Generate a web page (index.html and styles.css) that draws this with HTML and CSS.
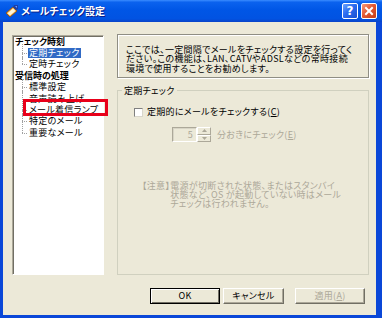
FILE: index.html
```html
<!DOCTYPE html>
<html lang="ja">
<head>
<meta charset="utf-8">
<title>メールチェック設定</title>
<link rel="stylesheet" href="styles.css">
</head>
<body>
<div class="window">
  <div class="titlebar">
    <svg class="app-icon" viewBox="0 0 14 14" width="14" height="14">
      <path d="M1 9 L8 3 L12 7 L5 13 Z" fill="#f2a93b" stroke="#8a4a10" stroke-width="0.8"/>
      <path d="M2.5 9.2 L8 4.6 L10.5 7 L5 11.6 Z" fill="#fff6d8"/>
      <path d="M9 1 L13 1 L13 5 L11 6 L8 3 Z" fill="#1b3fa8"/>
      <path d="M10 2 L12 2 L12 4 Z" fill="#6fa0ff"/>
    </svg>
    <span class="title">メールチェック設定</span>
    <div class="caption-buttons">
      <span class="cap-btn help">?</span>
      <span class="cap-btn close">
        <svg viewBox="0 0 14 14" width="14" height="14"><path d="M4 4 L10 10 M10 4 L4 10" stroke="#fff" stroke-width="2" stroke-linecap="square"/></svg>
      </span>
    </div>
  </div>
  <div class="frame">
    <div class="main">
      <div class="tree">
        <ul class="tree-root">
          <li class="node">
            <div class="node-label">チェック時刻</div>
            <ul class="children">
              <li class="leaf"><span class="leaf-text selected">定期チェック</span></li>
              <li class="leaf last"><span class="leaf-text">定時チェック</span></li>
            </ul>
          </li>
          <li class="node">
            <div class="node-label">受信時の処理</div>
            <ul class="children">
              <li class="leaf"><span class="leaf-text">標準設定</span></li>
              <li class="leaf"><span class="leaf-text">音声読み上げ</span></li>
              <li class="leaf"><span class="leaf-text">メール着信ランプ</span></li>
              <li class="leaf"><span class="leaf-text">特定のメール</span></li>
              <li class="leaf last"><span class="leaf-text">重要なメール</span></li>
            </ul>
          </li>
        </ul>
        <div class="annotation"></div>
      </div>
      <div class="pane">
        <div class="info">
          <div class="line">ここでは、一定間隔でメールをチェックする設定を行ってく</div>
          <div class="line">ださい。この機能は、LAN、CATVやADSLなどの常時接続</div>
          <div class="line">環境で使用することをお勧めします。</div>
        </div>
        <div class="group">
          <span class="group-title">定期チェック</span>
          <div class="check-row">
            <span class="checkbox"></span>
            <span class="check-label">定期的にメールをチェックする(<u>C</u>)</span>
          </div>
          <div class="spin-row">
            <span class="spin-edit">5</span>
            <span class="spin-buttons">
              <span class="spin-up"><svg viewBox="0 0 5 3" width="5" height="3"><path d="M0 3 L2.5 0 L5 3 Z" fill="#aca899"/></svg></span>
              <span class="spin-down"><svg viewBox="0 0 5 3" width="5" height="3"><path d="M0 0 L2.5 3 L5 0 Z" fill="#aca899"/></svg></span>
            </span>
            <span class="spin-label">分おきにチェック(<u>E</u>)</span>
          </div>
          <div class="note">
            <span class="note-tag">【注意】</span>
            <div class="note-body">
              <div class="line">電源が切断された状態、またはスタンバイ</div>
              <div class="line">状態など、OS が起動していない時はメール</div>
              <div class="line">チェックは行われません。</div>
            </div>
          </div>
        </div>
      </div>
    </div>
    <div class="buttons">
      <span class="btn btn-ok">OK</span>
      <span class="btn btn-cancel">キャンセル</span>
      <span class="btn btn-apply">適用(<u>A</u>)</span>
    </div>
  </div>
</div>
</body>
</html>
```

FILE: styles.css
```css
html, body {
  margin: 0;
  padding: 0;
}

body {
  font-family: "Noto Sans CJK JP", "Noto Sans", sans-serif;
  font-size: 9px;
  font-feature-settings: "palt";
  letter-spacing: 0.3px;
  color: #000;
  background: #ECE9D8;
}

.window {
  width: 382px;
  height: 318px;
  display: flex;
  flex-direction: column;
  overflow: hidden;
}

/* Title bar */
.titlebar {
  height: 22px;
  flex: none;
  display: flex;
  align-items: center;
  padding-left: 5px;
  background: linear-gradient(to bottom, #3a8cff 0%, #0b62ee 10%, #0056e6 45%, #0153e2 85%, #0a43c8 100%);
}

.app-icon {
  flex: none;
}

.title {
  margin-left: 2px;
  color: #fff;
  font-weight: bold;
  font-size: 10px;
  letter-spacing: 0;
  line-height: 14px;
  text-shadow: 1px 1px 0 #0a1f8a;
}

.caption-buttons {
  margin-left: auto;
  display: flex;
  gap: 3px;
  padding-right: 5px;
}

.cap-btn {
  width: 16px;
  height: 16px;
  box-sizing: border-box;
  border: 1px solid #fff;
  border-radius: 2px;
  display: flex;
  align-items: center;
  justify-content: center;
  color: #fff;
  font-family: "DejaVu Sans", sans-serif;
  font-weight: bold;
  font-size: 12px;
  letter-spacing: 0;
  line-height: 14px;
}

.cap-btn.help {
  background: linear-gradient(135deg, #6ea3ff 0%, #2a6cf0 45%, #1a4fd0 100%);
}

.cap-btn.close {
  background: linear-gradient(135deg, #f49a7c 0%, #e35a34 45%, #c23d17 100%);
}

/* Window frame */
.frame {
  flex: 1;
  display: flex;
  flex-direction: column;
  background: #ECE9D8;
  border-left: 3px solid #0a47d8;
  border-right: 6px solid #0a47d8;
  border-bottom: 3px solid #0a47d8;
  padding: 12px 7px 0 9px;
}

.main {
  display: flex;
  gap: 13px;
  height: 241px;
}

/* Tree */
.tree {
  position: relative;
  width: 92px;
  box-sizing: border-box;
  margin-top: 1px;
  background: #fff;
  border: 1px solid;
  border-color: #aca899 #fff #fff #aca899;
  box-shadow: inset 1px 1px 0 #716f64;
  padding-left: 2px;
}

.tree ul {
  list-style: none;
  margin: 0;
  padding: 0;
}

.node-label {
  font-weight: bold;
  letter-spacing: 0;
  line-height: 11.375px;
  height: 11.375px;
  white-space: nowrap;
}

.children {
  margin-left: 13px !important;
}

.leaf {
  position: relative;
  height: 11.375px;
  white-space: nowrap;
}

.leaf::before {
  content: "";
  position: absolute;
  left: -6px;
  top: -3px;
  bottom: 0;
  border-left: 1px dotted #a0a0a0;
}

.leaf.last::before {
  bottom: 50%;
}

.leaf::after {
  content: "";
  position: absolute;
  left: -6px;
  top: 50%;
  width: 5px;
  border-top: 1px dotted #a0a0a0;
}

.leaf-text {
  display: inline-block;
  padding: 0 1px;
  line-height: 10px;
  margin-top: 0.7px;
  vertical-align: top;
}

.leaf-text.selected {
  background: #316ac5;
  color: #fff;
}

.annotation {
  position: absolute;
  left: 10px;
  top: 63px;
  width: 85px;
  height: 17px;
  box-sizing: border-box;
  border: 3px solid #e8001a;
}

/* Right pane */
.pane {
  flex: 1;
  display: flex;
  flex-direction: column;
}

.info {
  height: 44px;
  flex: none;
  box-sizing: border-box;
  border: 1px solid #8f8e84;
  box-shadow: 1px 1px 0 #fff, inset 1px 1px 0 #fff;
  padding: 10px 0 0 8px;
  line-height: 9.3px;
  white-space: nowrap;
}

.group {
  flex: 1;
  margin-top: 12px;
  border: 1px solid #d0d0bf;
  display: flex;
  flex-direction: column;
  align-items: flex-start;
}

.group-title {
  display: block;
  margin: -6px 0 0 4px;
  padding: 0 2px;
  background: #ECE9D8;
  line-height: 11px;
  white-space: nowrap;
}

.check-row {
  display: flex;
  align-items: center;
  height: 10px;
  margin: 11px 0 0 16px;
}

.checkbox {
  width: 9px;
  height: 9px;
  box-sizing: border-box;
  background: #fff;
  border: 1px solid;
  border-color: #808080 #d8d6cc #d8d6cc #808080;
}

.check-label {
  margin-left: 4px;
  white-space: nowrap;
  line-height: 10px;
}

.spin-row {
  display: flex;
  align-items: center;
  height: 15px;
  margin: 10px 0 0 54px;
}

.spin-edit {
  width: 25px;
  height: 15px;
  box-sizing: border-box;
  border: 1px solid;
  border-color: #aca899 #fff #fff #aca899;
  box-shadow: inset 1px 1px 0 #d8d5c6;
  text-align: right;
  padding-right: 3px;
  line-height: 13px;
  color: #aca899;
}

.spin-buttons {
  width: 14px;
  height: 15px;
  display: flex;
  flex-direction: column;
}

.spin-up,
.spin-down {
  flex: 1;
  display: flex;
  align-items: center;
  justify-content: center;
  box-sizing: border-box;
  border: 1px solid;
  border-color: #fff #aca899 #aca899 #fff;
  background: #ECE9D8;
}

.spin-label {
  margin-left: 6px;
  color: #aca899;
  white-space: nowrap;
}

.note {
  display: flex;
  margin: 39px 0 0 24px;
  color: #aca899;
  line-height: 9px;
  white-space: nowrap;
}

/* Buttons */
.buttons {
  display: flex;
  justify-content: flex-end;
  margin-top: 13px;
  padding-right: 4px;
}

.btn {
  height: 16px;
  box-sizing: border-box;
  display: flex;
  align-items: center;
  justify-content: center;
  background: #ECE9D8;
  border: 1px solid;
  border-color: #fff #716f64 #716f64 #fff;
  box-shadow: inset -1px -1px 0 #aca899;
  line-height: 12px;
  white-space: nowrap;
}

.btn-ok {
  width: 70px;
  border-color: #000;
  box-shadow: inset 1px 1px 0 #fff, inset -1px -1px 0 #716f64;
}

.btn-cancel {
  width: 61px;
  margin-left: 3px;
}

.btn-apply {
  width: 70px;
  margin-left: 11px;
  color: #aca899;
}
```
